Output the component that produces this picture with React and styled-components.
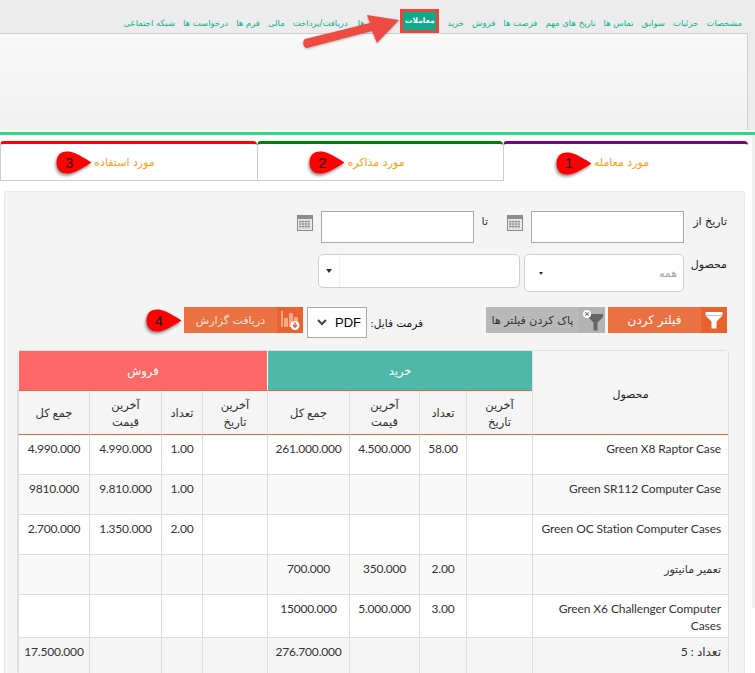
import React from "react";
import styled, { createGlobalStyle } from "styled-components";

const GlobalStyle = createGlobalStyle`
  html, body {
    margin: 0;
    padding: 0;
    height: 673px;
    overflow: hidden;
    background: #fff;
    font-family: "DejaVu Sans", "Liberation Sans", sans-serif;
  }
`

const Page = styled.div`
  position: relative;
  width: 755px;
  height: 673px;
  overflow: hidden;
  direction: rtl;
  color: #333;
`

const TopArea = styled.div`
  background: #ececec;
`

const Nav = styled.ul`
  display: flex;
  align-items: flex-end;
  gap: 8px;
  height: 33px;
  margin: 0;
  padding: 0 13px 0 0;
  box-sizing: border-box;
  list-style: none;
`

const NavItem = styled.li`
  display: flex;
  align-items: center;
  justify-content: center;
  white-space: nowrap;
  line-height: 12px;
  box-sizing: border-box;
  margin-right: ${(p) => (p.$wide ? "2px" : "0")};
  color: ${(p) => (p.$active ? "#fff" : "#12b08f")};
  height: ${(p) => (p.$active ? "24px" : "21px")};
  width: ${(p) => (p.$active ? "39px" : "auto")};
  font-size: ${(p) => (p.$active ? "7.5px" : "8.5px")};
  font-weight: ${(p) => (p.$active ? "bold" : "normal")};
  background: ${(p) => (p.$active ? "#0fa98b" : "transparent")};
  border: ${(p) => (p.$active ? "3px solid #e8453c" : "none")};
`

const Banner = styled.div`
  height: 97px;
  margin-left: -1px;
  margin-right: 7px;
  background: linear-gradient(#f9f9f9, #f1f1f1);
  border: 1px solid #d0d0d0;
  border-bottom: none;
  box-sizing: border-box;
`

const GreenLine = styled.div`
  height: 3px;
  margin-top: 2px;
  background: #2ed888;
`

const Tabs = styled.div`
  display: grid;
  grid-template-columns: 245px 246px 257px;
  margin: 6px 7px 0 0;
  height: 40px;
`

const Tab = styled.div`
  display: flex;
  align-items: center;
  justify-content: center;
  padding-right: 9px;
  box-sizing: border-box;
  background: #fff;
  border-top: 3px solid ${(p) => p.$color};
  border-top-left-radius: 4px;
  border-top-right-radius: 4px;
  border-left: 1px solid #ccc;
  border-bottom: ${(p) => (p.$active ? "none" : "1px solid #ccc")};
`

const TabLabel = styled.span`
  position: relative;
  font-size: 11px;
  color: #fa9f12;
  white-space: nowrap;
`

const Marker = styled.span`
  position: absolute;
  top: 50%;
  right: calc(100% + 2px);
  width: 36px;
  height: 23px;
  margin-top: -11px;
  display: flex;
  align-items: center;
  justify-content: center;
  box-sizing: border-box;
  direction: ltr;
`

const MarkerNumber = styled.span`
  position: relative;
  margin-right: 10px;
  font: 14px "Liberation Sans", sans-serif;
  color: #111;
`

const MarkerShape = styled.svg`
  position: absolute;
  left: 0;
  top: 0;
  filter: drop-shadow(-1px 2px 1.5px rgba(0, 0, 0, 0.45));
`

const Panel = styled.div`
  margin: 10px 10px 0 4px;
  padding: 19px 15px 0 12px;
  height: 520px;
  box-sizing: border-box;
  background: #f4f4f4;
  border: 1px solid #e9e9e9;
  border-bottom: none;
  border-radius: 3px 3px 0 0;
`

const ScrollStrip = styled.div`
  position: absolute;
  top: 135px;
  right: 0;
  width: 3px;
  height: 473px;
  background: #efefef;
`

const FormRow = styled.div`
  display: flex;
  align-items: flex-start;
  height: ${(p) => p.$height}px;
  padding-right: 2px;
`

const FieldLabel = styled.label`
  width: 43px;
  font-size: 11px;
  line-height: 18px;
  padding-top: 2px;
  color: #222;
`

const DateInput = styled.div`
  width: 153px;
  height: 32px;
  box-sizing: border-box;
  background: #fff;
  border: 1px solid #a9a9a9;
`

const CalendarIcon = styled.svg`
  margin: 4px 8px 0 0;
  flex: none;
`

const ToLabel = styled.span`
  width: 33px;
  padding: 2px 19px 0 0;
  box-sizing: border-box;
  font-size: 11px;
  line-height: 18px;
  color: #333;
`

const SelectBox = styled.div`
  display: flex;
  align-items: center;
  justify-content: space-between;
  width: ${(p) => p.$width}px;
  height: ${(p) => p.$height}px;
  margin-left: 4px;
  padding: ${(p) => (p.$wide ? "0 6px 0 0" : "0 6px 0 14px")};
  box-sizing: border-box;
  background: #fff;
  border: 1px solid #cfcfcf;
  border-radius: 5px;
  font-size: 11px;
  color: #a5a5a5;
`

const Caret = styled.span`
  width: 0;
  height: 0;
  border-left: ${(p) => p.$size}px solid transparent;
  border-right: ${(p) => p.$size}px solid transparent;
  border-top: ${(p) => p.$size + 1}px solid #333;
`

const CaretCell = styled.span`
  display: flex;
  align-items: center;
  height: 100%;
  padding: 0 7px 0 7px;
  border-right: 1px solid #f0f0f0;
`

const ActionRow = styled.div`
  display: flex;
  align-items: flex-start;
  height: 43px;
  padding-right: 2px;
`

const ActionButton = styled.div`
  display: flex;
  align-items: stretch;
  width: 119px;
  height: 26px;
  margin-right: ${(p) => p.$gap || 0}px;
  background: ${(p) => p.$bg};
  color: ${(p) => p.$fg};
`

const ButtonIcon = styled.span`
  display: flex;
  align-items: center;
  justify-content: center;
  flex: none;
  width: 26px;
  background: ${(p) => p.$bg};
`

const ButtonText = styled.span`
  flex: 1;
  display: flex;
  align-items: center;
  justify-content: center;
  white-space: nowrap;
  font-size: ${(p) => p.$size}px;
  letter-spacing: ${(p) => p.$spacing}px;
`

const FormatLabel = styled.span`
  width: 56px;
  margin-right: 63px;
  padding-top: 9px;
  font-size: 10.5px;
  line-height: 14px;
  color: #111;
  white-space: nowrap;
`

const FormatSelect = styled.div`
  display: flex;
  align-items: center;
  justify-content: space-between;
  width: 60px;
  height: 31px;
  margin-left: 4px;
  padding: 0 5px 0 9px;
  box-sizing: border-box;
  background: #fff;
  border: 1px solid #a9a9a9;
  font: 13px "Liberation Sans", sans-serif;
  color: #000;
`

const ReportWrap = styled.div`
  position: relative;
`

const Table = styled.table`
  width: 712px;
  table-layout: fixed;
  border-collapse: separate;
  border-spacing: 0;
  background: #fff;
  border: 1px solid #e0e0e0;
  border-radius: 4px;
  font-family: "Lato", "DejaVu Sans", sans-serif;
  font-size: 12px;
  color: #333;
`

const GroupHead = styled.th`
  height: 39px;
  padding: 0;
  background: ${(p) => p.$bg};
  border-bottom: 1px solid #e9682f;
  border-left: 1px solid #fff;
  color: #fff;
  font-weight: normal;
  font-size: 11.5px;
`

const ProductHead = styled.th`
  padding: 3px 0 0;
  background: #f5f5f5;
  border-left: 1px solid #ddd;
  border-bottom: 1px solid #e9682f;
  font-weight: normal;
  font-size: 11px;
  color: #222;
`

const ColHead = styled.th`
  height: 43px;
  padding: 0;
  background: #f5f5f5;
  border-left: 1px solid #ddd;
  border-bottom: 1px solid #e9682f;
  font-weight: normal;
  font-size: 11.5px;
  line-height: 17px;
  color: #333;
`

const Row = styled.tr`
  background: ${(p) => (p.$total ? "#f5f5f5" : p.$striped ? "#f9f9f9" : "#fff")};
`

const Cell = styled.td`
  height: ${(p) => p.$height || 34}px;
  box-sizing: content-box;
  padding: 5px 0 0;
  vertical-align: top;
  text-align: center;
  line-height: 17px;
  letter-spacing: -0.2px;
  border-left: 1px solid #ddd;
  border-bottom: 1px solid #ddd;
  white-space: nowrap;
`

const NameCell = styled(Cell)`
  padding-right: 7px;
  padding-left: 5px;
  text-align: right;
  white-space: normal;
  letter-spacing: -0.1px;
  font-size: ${(p) => (p.$persian ? "11px" : "12px")};
`

const ArrowShape = styled.svg`
  position: absolute;
  left: 300px;
  top: 10px;
  filter: drop-shadow(0 1px 1px rgba(0, 0, 0, 0.25));
`

const navItems = [
  "مشخصات", "جزئیات", "سوابق", "تماس ها", "تاریخ های مهم", "فرصت ها", "فروش", "خرید",
  "معاملات", "پیوست ها", "دریافت/پرداخت", "مالی", "فرم ها", "درخواست ها", "شبکه اجتماعی",
]

const rows = [
  { name: "Green X8 Raptor Case", buy: ["", "58.00", "4.500.000", "261.000.000"], sell: ["", "1.00", "4.990.000", "4.990.000"] },
  { name: "Green SR112 Computer Case", buy: ["", "", "", ""], sell: ["", "1.00", "9.810.000", "9810.000"] },
  { name: "Green OC Station Computer Cases", buy: ["", "", "", ""], sell: ["", "2.00", "1.350.000", "2.700.000"] },
  { name: "تعمیر مانیتور", persian: true, buy: ["", "2.00", "350.000", "700.000"], sell: ["", "", "", ""] },
  { name: "Green X6 Challenger Computer Cases", buy: ["", "3.00", "5.000.000", "15000.000"], sell: ["", "", "", ""], tall: true },
]

const colWidths = [196, 66, 47, 70, 82, 65, 41, 72, 71]

function Badge({ n }) {
  return (
    <Marker>
      <MarkerShape width="36" height="23" viewBox="0 0 36 23">
        <path d="M11 0.5 C17 0.5 22 3 35.5 11.5 C22 20 17 22.5 11 22.5 C4 22.5 0.5 18 0.5 11.5 C0.5 5 4 0.5 11 0.5 Z" fill="#f00" />
      </MarkerShape>
      <MarkerNumber>{n}</MarkerNumber>
    </Marker>
  )
}

function Calendar() {
  return (
    <CalendarIcon width="16" height="16" viewBox="0 0 16 16">
      <rect x="0.5" y="0.5" width="15" height="15" fill="#e8e8e8" stroke="#8a8a8a" />
      <rect x="1" y="1" width="14" height="3" fill="#8d8d8d" />
      <path d="M3 5.5v8M6 5.5v8M9 5.5v8M12 5.5v8M2 6.5h11M2 9h11M2 11.5h11" stroke="#9a9a9a" strokeWidth="1" />
    </CalendarIcon>
  )
}

function FilterIcon() {
  return (
    <svg width="18" height="18" viewBox="0 0 18 18">
      <path d="M0.5 1h17v3.5l-6 6v7h-5v-7l-6-6z" fill="#fff" />
      <path d="M0.5 4.5h17" stroke="rgba(0,0,0,0.25)" strokeWidth="1" />
    </svg>
  )
}

function ClearFilterIcon() {
  return (
    <svg width="26" height="26" viewBox="0 0 26 26">
      <path d="M9 7h15v3l-5.5 5.5v8h-4v-8l-5.5-5.5z" fill="#666" />
      <circle cx="8" cy="7" r="4" fill="#fff" />
      <path d="M6.3 5.3l3.4 3.4M9.7 5.3l-3.4 3.4" stroke="#777" strokeWidth="1.2" />
    </svg>
  )
}

function ReportIcon() {
  return (
    <svg width="22" height="22" viewBox="0 0 22 22">
      <path d="M2 2h2v16h-2zM5 9h4v9h-4zM10 4h4v14h-4zM15 8h4v6h-4z" fill="#f3a98b" />
      <circle cx="16" cy="16.5" r="4.5" fill="#fff" />
      <path d="M16 13.5v4M14 16l2 2.2 2-2.2" stroke="#e9612c" strokeWidth="1.5" fill="none" />
    </svg>
  )
}

function App() {
  return (
    <Page>
      <GlobalStyle />
      <TopArea>
        <Nav>
          {navItems.map((item, i) => (
            <NavItem key={item} $active={i === 8} $wide={i === 10}>{item}</NavItem>
          ))}
        </Nav>
        <Banner />
      </TopArea>
      <GreenLine />

      <Tabs>
        <Tab $color="#800080" $active>
          <TabLabel>مورد معامله<Badge n="1" /></TabLabel>
        </Tab>
        <Tab $color="#008000">
          <TabLabel>مورد مذاکره<Badge n="2" /></TabLabel>
        </Tab>
        <Tab $color="#ff0000">
          <TabLabel>مورد استفاده<Badge n="3" /></TabLabel>
        </Tab>
      </Tabs>

      <Panel>
        <FormRow $height={43}>
          <FieldLabel>تاریخ از</FieldLabel>
          <DateInput />
          <Calendar />
          <ToLabel>تا</ToLabel>
          <DateInput />
          <Calendar />
        </FormRow>
        <FormRow $height={53}>
          <FieldLabel>محصول</FieldLabel>
          <SelectBox $width={160} $height={38}>
            همه
            <Caret $size={2} />
          </SelectBox>
          <SelectBox $width={202} $height={34} $wide>
            <span />
            <CaretCell><Caret $size={3} /></CaretCell>
          </SelectBox>
        </FormRow>
        <ActionRow>
          <ActionButton $bg="#e97142" $fg="#fff">
            <ButtonIcon $bg="#e9612c"><FilterIcon /></ButtonIcon>
            <ButtonText $size={12} $spacing={1}>فیلتر کردن</ButtonText>
          </ActionButton>
          <ActionButton $bg="#b9b9b9" $fg="#333" $gap={3}>
            <ButtonIcon $bg="#b3b3b3"><ClearFilterIcon /></ButtonIcon>
            <ButtonText $size={11} $spacing={0.6}>پاک کردن فیلتر ها</ButtonText>
          </ActionButton>
          <FormatLabel>فرمت فایل:</FormatLabel>
          <FormatSelect>
            PDF
            <svg width="10" height="7" viewBox="0 0 10 7">
              <path d="M1 1l4 4 4-4" fill="none" stroke="#444" strokeWidth="2" />
            </svg>
          </FormatSelect>
          <ReportWrap>
            <ActionButton $bg="#e97142" $fg="#fbe3d8">
              <ButtonIcon $bg="#e9612c"><ReportIcon /></ButtonIcon>
              <ButtonText $size={11} $spacing={0.5}>دریافت گزارش</ButtonText>
            </ActionButton>
            <Badge n="4" />
          </ReportWrap>
        </ActionRow>

        <Table>
          <colgroup>
            {colWidths.map((w, i) => <col key={i} width={w} />)}
          </colgroup>
          <thead>
            <tr>
              <ProductHead rowSpan={2}>محصول</ProductHead>
              <GroupHead colSpan={4} $bg="#50b8a8">خرید</GroupHead>
              <GroupHead colSpan={4} $bg="#ff6868">فروش</GroupHead>
            </tr>
            <tr>
              {[0, 1].map((g) => (
                <React.Fragment key={g}>
                  <ColHead>آخرین<br />تاریخ</ColHead>
                  <ColHead>تعداد</ColHead>
                  <ColHead>آخرین<br />قیمت</ColHead>
                  <ColHead>جمع کل</ColHead>
                </React.Fragment>
              ))}
            </tr>
          </thead>
          <tbody>
            {rows.map((r, i) => (
              <Row key={r.name} $striped={i % 2 === 1}>
                <NameCell $height={r.tall ? 37 : 34} $persian={r.persian}>{r.name}</NameCell>
                {[...r.buy, ...r.sell].map((v, j) => <Cell key={j} $height={r.tall ? 37 : 34}>{v}</Cell>)}
              </Row>
            ))}
            <Row $total>
              <NameCell $height={30}>تعداد : 5</NameCell>
              <Cell $height={30} />
              <Cell $height={30} />
              <Cell $height={30} />
              <Cell $height={30}>276.700.000</Cell>
              <Cell $height={30} />
              <Cell $height={30} />
              <Cell $height={30} />
              <Cell $height={30}>17.500.000</Cell>
            </Row>
          </tbody>
        </Table>
      </Panel>

      <ScrollStrip />

      <ArrowShape width="105" height="42" viewBox="0 0 105 42">
        <path d="M7 38 L72 21 L77 33 L99 10 L67 5 L70 13 L5 29 C2 31 3 38 7 38 Z" fill="#ee4b43" />
      </ArrowShape>
    </Page>
  )
}

export default App;
